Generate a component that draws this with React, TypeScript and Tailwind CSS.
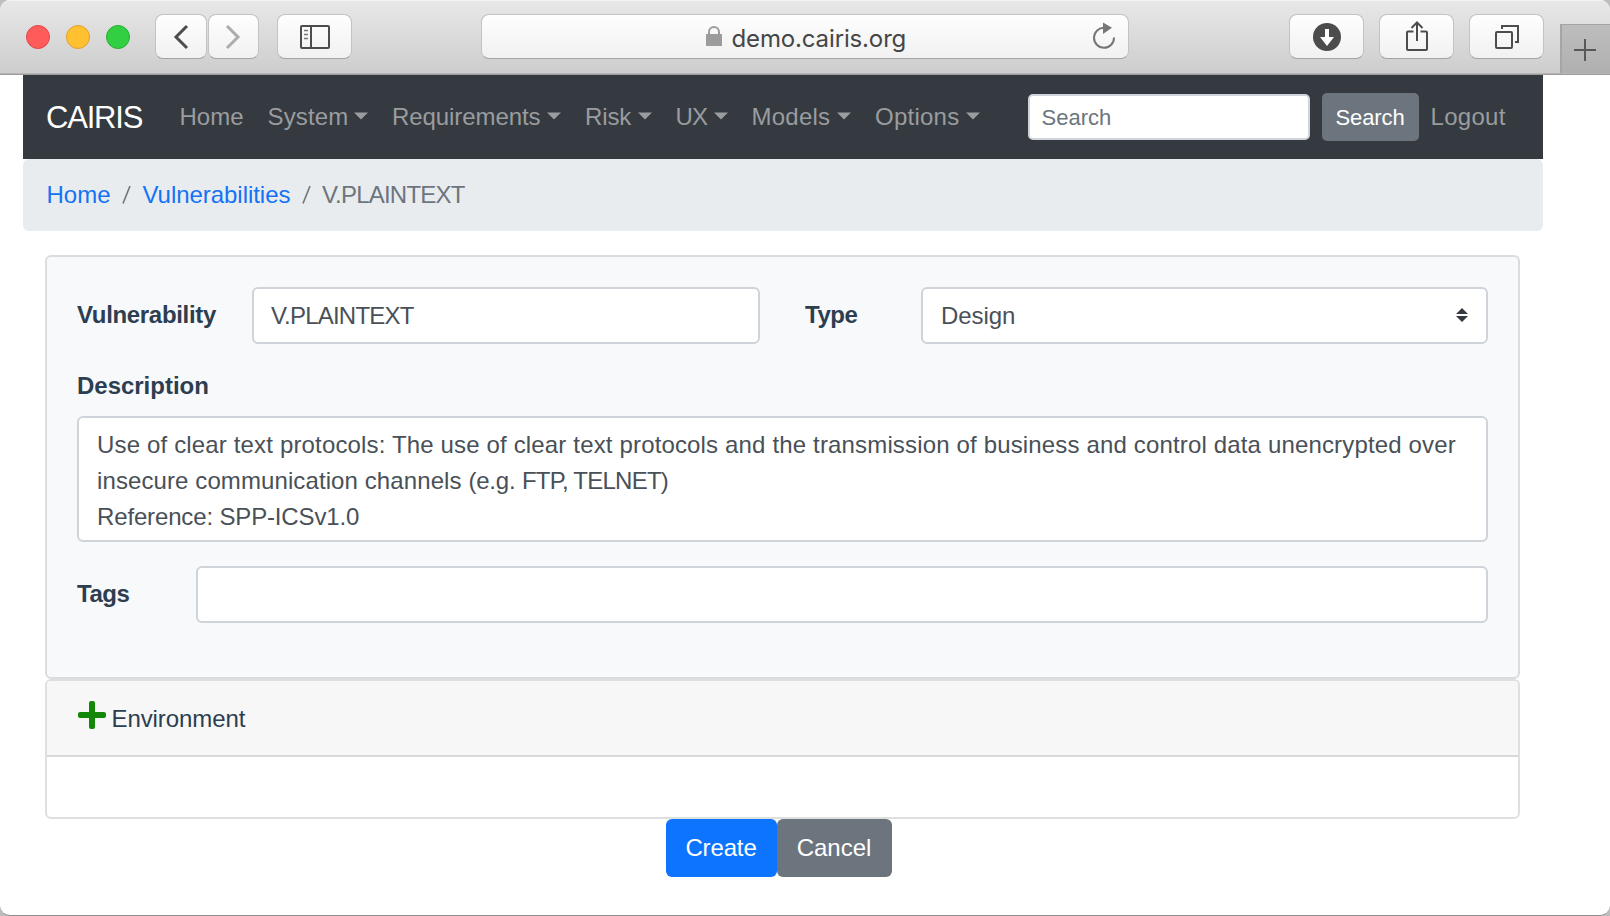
import React from "react";

const toolButton =
  "flex h-[45px] items-center justify-center rounded-[8px] border border-[#c3c3c3] border-b-[#a3a3a3] bg-linear-to-b from-[#fefefe] to-[#f1f1f1]";

const field = "rounded-[6px] border-2 border-[#ced4da] bg-white text-[#495057]";

function Caret() {
  return (
    <svg width="14" height="8" viewBox="0 0 14 8" className="mb-[2px] shrink-0">
      <path d="M0 0.4h14L7 7.6z" fill="#9a9c9f" />
    </svg>
  );
}

const menus = [
  { label: "System", item: "w-[124.5px]", text: "w-[86px] tracking-[0.13px]" },
  { label: "Requirements", item: "w-[193px]", text: "w-[154.5px] tracking-[-0.08px]" },
  { label: "Risk", item: "w-[90.5px]", text: "w-[52.5px] tracking-[-0.1px]" },
  { label: "UX", item: "w-[76px]", text: "w-[38px] tracking-[-0.8px]" },
  { label: "Models", item: "w-[123.5px]", text: "w-[85px] tracking-[0.25px]" },
  { label: "Options", item: "w-[152.5px]", text: "w-[90.5px] tracking-[0.25px]" },
];

function BrowserBar() {
  return (
    <header className="flex h-[75px] items-start border-b border-[#9d9d9f] bg-linear-to-b from-[#e8e8e8] to-[#cdcdcd] shadow-[inset_0_-1px_0_#b5b5b7,inset_0_1px_0_#f2f2f2]">
      <div className="ml-[26px] mt-[25px] flex gap-4">
        <span className="size-6 rounded-full border border-[#e2464a] bg-[#ff5b5b]" />
        <span className="size-6 rounded-full border border-[#e0a12c] bg-[#ffc130]" />
        <span className="size-6 rounded-full border border-[#28ae33] bg-[#33cf42]" />
      </div>
      <div className="ml-[25px] mt-[14px] flex gap-px">
        <button className={`${toolButton} w-[51.5px]`}>
          <svg width="16" height="26" viewBox="0 0 16 26" fill="none" stroke="#4c4c4c" strokeWidth="3">
            <path d="M14 2 3 13l11 11" />
          </svg>
        </button>
        <button className={`${toolButton} w-[51.5px]`}>
          <svg width="16" height="26" viewBox="0 0 16 26" fill="none" stroke="#adadad" strokeWidth="3">
            <path d="m2 2 11 11L2 24" />
          </svg>
        </button>
      </div>
      <button className={`${toolButton} ml-[18px] mt-[14px] w-[75px]`}>
        <svg width="30" height="24" viewBox="0 0 30 24" fill="none" stroke="#4c4c4c" strokeWidth="2">
          <rect x="1" y="1" width="28" height="22" rx="1" />
          <path d="M11 1v22" />
          <path d="M4 5.5h4M4 9.5h4M4 13.5h4" strokeWidth="1.5" stroke="#777" />
        </svg>
      </button>
      <div className={`${toolButton} ml-[129px] mt-[14px] w-[648px]`}>
        <div className="flex w-[620px] items-center">
          <svg width="16" height="20" viewBox="0 0 16 20" className="ml-[211px] mb-px">
            <path d="M0 8h16v12H0z" fill="#9c9c9c" />
            <path d="M3 9V6a5 5 0 0 1 10 0v3" fill="none" stroke="#9c9c9c" strokeWidth="2" />
          </svg>
          <span className="ml-[9.5px] pt-[4px] font-['Inter',sans-serif] text-[24px] leading-[30px] tracking-[-0.14px] text-[#454545]">
            demo.cairis.org
          </span>
          <svg width="24" height="28" viewBox="0 0 24 28" className="ml-auto mb-px -mr-px">
            <path d="M12.5 5.8A10 10 0 1 0 22 15.5" fill="none" stroke="#767676" strokeWidth="2" />
            <path d="M11 0.500v11.500l9-6.200z" fill="#767676" />
          </svg>
        </div>
      </div>
      <div className="ml-[160px] mt-[14px] flex gap-[15px]">
        <button className={`${toolButton} w-[75px]`}>
          <svg width="28" height="28" viewBox="0 0 28 28">
            <circle cx="14" cy="14" r="14" fill="#4c4c4c" />
            <path d="M12 6h4v8h5l-7 9-7-9h5z" fill="#fff" />
          </svg>
        </button>
        <button className={`${toolButton} w-[75px]`}>
          <svg width="24" height="32" viewBox="0 0 24 32" fill="none" stroke="#4c4c4c" strokeWidth="2" className="mb-[2px]">
            <path d="M8.500 11.500H3a1 1 0 0 0-1 1V29a1 1 0 0 0 1 1h18a1 1 0 0 0 1-1V12.500a1 1 0 0 0-1-1h-5.500" />
            <path d="M12 21V3M6.500 8 12 2.500 17.500 8" />
          </svg>
        </button>
        <button className={`${toolButton} w-[75px]`}>
          <svg width="24" height="24" viewBox="0 0 24 24" fill="none" stroke="#4c4c4c" strokeWidth="2">
            <rect x="1" y="7" width="16" height="16" rx="1" />
            <path d="M7 4V1h16v16h-3" />
          </svg>
        </button>
      </div>
      <button className="ml-auto mt-6 flex h-[49px] w-[50px] items-center justify-center border-l-2 border-t border-[#a5a5a5] bg-linear-to-b from-[#bdbdbd] to-[#b0b0b0] pt-[2px] pr-[2px]">
        <svg width="22" height="22" viewBox="0 0 22 22" stroke="#585858" strokeWidth="2">
          <path d="M11 0v22M0 11h22" />
        </svg>
      </button>
    </header>
  );
}

function SiteNav() {
  return (
    <nav className="flex h-[84px] items-center bg-[#343a40] pl-[23px] text-[#9a9c9f]">
      <a className="w-[133.5px] pt-[2px] text-[31px] tracking-[-1.2px] text-white">CAIRIS</a>
      <a className="w-[88px]">Home</a>
      {menus.map((m) => (
        <a key={m.label} className={`flex items-center ${m.item}`}>
          <span className={m.text}>{m.label}</span>
          <Caret />
        </a>
      ))}
      <input
        placeholder="Search"
        className="h-[46px] w-[282px] rounded-[5px] border-2 border-[#ced4da] bg-white px-[12px] pt-[2px] text-[22px] placeholder:text-[#6c757d]"
      />
      <button className="ml-[12px] h-[48px] w-[97px] rounded-[5px] bg-[#6c757d] pt-px text-[22px] tracking-[-0.09px] text-white">
        Search
      </button>
      <a className="ml-[12px] tracking-[0.3px]">Logout</a>
    </nav>
  );
}

function Breadcrumb() {
  return (
    <div className="flex h-[72px] items-center rounded-[6px] bg-[#e9ecef] pl-[23.5px] text-[#6c757d]">
      <a className="w-[75.5px] text-[#1473f5]">Home</a>
      <svg width="9" height="20" viewBox="0 0 9 20" className="mr-[11.5px]">
        <path d="M1 18.500 8 1" stroke="#6c757d" strokeWidth="1.600" />
      </svg>
      <a className="w-[159.500px] tracking-[-0.04px] text-[#1473f5]">Vulnerabilities</a>
      <svg width="9" height="20" viewBox="0 0 9 20" className="mr-[11px]">
        <path d="M1 18.500 8 1" stroke="#6c757d" strokeWidth="1.600" />
      </svg>
      <span className="tracking-[-0.78px]">V.PLAINTEXT</span>
    </div>
  );
}

function VulnerabilityCard() {
  return (
    <section className="h-[424px] rounded-[6px] border-2 border-[#dadcdd] bg-[#f8f9fb] px-[30px] pt-[30px]">
      <div className="flex h-[57px] items-center">
        <label className="w-[175px] pb-[2px] font-bold tracking-[-0.32px]">Vulnerability</label>
        <div className={`${field} flex h-[57px] w-[508px] items-center pl-[17px] tracking-[-0.78px]`}>V.PLAINTEXT</div>
        <label className="ml-[45px] w-[116px] pb-[2px] font-bold tracking-[-0.5px]">Type</label>
        <div className={`${field} flex h-[57px] w-[567px] items-center justify-between pl-[18px] pr-[18px]`}>
          <span className="tracking-[-0.07px]">Design</span>
          <svg width="12" height="14" viewBox="0 0 12 14" fill="#343a40" className="mb-[2px]">
            <path d="M0 6 6 0l6 6zM0 8h12l-6 6z" />
          </svg>
        </div>
      </div>
      <label className="mt-6 block font-bold tracking-[-0.02px]">Description</label>
      <div className={`${field} mt-[12px] h-[126px] w-[1411px] whitespace-nowrap pl-[18px] pt-[9px]`}>
        <p className="tracking-[0.157px]">
          Use of clear text protocols: The use of clear text protocols and the transmission of business and control data unencrypted over
        </p>
        <p className="tracking-[0.1px]">
          insecure communication channels{" "}
          <span className="tracking-[-0.2px]">(e.g. </span>
          <span className="tracking-[-0.75px]">FTP, TELNET)</span>
        </p>
        <p className="tracking-[-0.15px]">Reference: SPP-ICSv1.0</p>
      </div>
      <div className="mt-6 flex h-[57px] items-center">
        <label className="w-[119px] pb-[1px] font-bold tracking-[-0.5px]">Tags</label>
        <div className={`${field} h-[57px] w-[1292px]`} />
      </div>
    </section>
  );
}

function EnvironmentCard() {
  return (
    <section className="h-[140px] overflow-hidden rounded-[6px] border-2 border-[#dfdfdf] bg-white">
      <div className="flex h-[76px] items-center border-b-2 border-[#d9d9d9] bg-[#f7f7f7] pl-[31px]">
        <svg width="28" height="28" viewBox="0 0 28 28" className="mb-[7px]" fill="#138808">
          <rect x="11" y="0" width="6" height="28" rx="2" />
          <rect x="0" y="11" width="28" height="6" rx="2" />
        </svg>
        <span className="ml-[5.5px] pt-[2px] tracking-[-0.08px]">Environment</span>
      </div>
    </section>
  );
}

export default function App() {
  return (
    <div className="h-[916px] w-[1610px] overflow-hidden bg-[#bdbdbd] font-['Liberation_Sans',Arial,sans-serif] text-[24px] leading-[36px] text-[#2c3e50]">
      <div className="h-[916px] overflow-hidden rounded-[10px] border-b border-[#8e8e8e] bg-white">
        <BrowserBar />
        <div className="ml-[23px] w-[1520px]">
          <SiteNav />
          <Breadcrumb />
          <main className="ml-[22px] mt-6 w-[1475px]">
            <VulnerabilityCard />
            <EnvironmentCard />
            <div className="ml-[621px] flex h-[58px]">
              <button className="w-[111px] rounded-[6px] bg-[#0d74ff] pr-px tracking-[-0.14px] text-white">Create</button>
              <button className="w-[115px] rounded-[6px] bg-[#6c757d] pr-px text-white">Cancel</button>
            </div>
          </main>
        </div>
      </div>
    </div>
  );
}
